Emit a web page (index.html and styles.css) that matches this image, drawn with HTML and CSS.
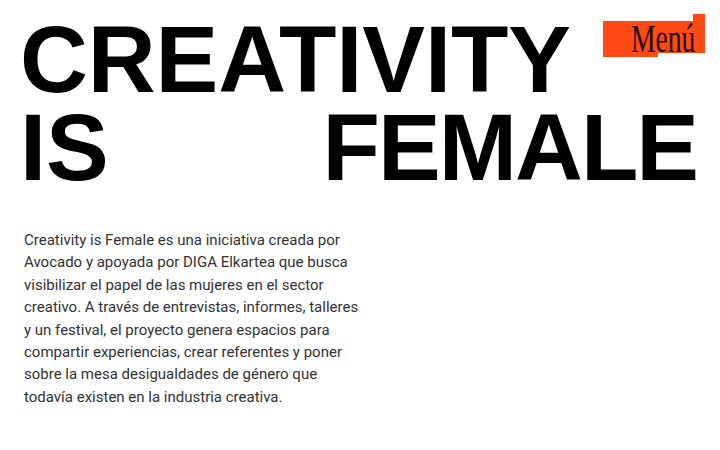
FILE: index.html
```html
<!DOCTYPE html>
<html lang="es">
<head>
<meta charset="utf-8">
<title>Creativity is Female</title>
<link rel="stylesheet" href="styles.css">
</head>
<body>
<header class="hero">
  <h1 class="title">
    <span class="line">CREATIVITY</span>
    <span class="line line-split"><span>IS</span><span class="word-tight">FEMALE</span></span>
  </h1>
  <button class="menu" type="button"><span class="menu-label">Menú</span></button>
</header>
<main class="intro">
  <p>Creativity is Female es una iniciativa creada por Avocado y apoyada por DIGA Elkartea que busca visibilizar el papel de las mujeres en el sector creativo. A través de entrevistas, informes, talleres y un festival, el proyecto genera espacios para compartir experiencias, crear referentes y poner sobre la mesa desigualdades de género que todavía existen en la industria creativa.</p>
</main>
</body>
</html>
```
FILE: styles.css
```css
html, body {
  margin: 0;
  padding: 0;
  background: #ffffff;
}
body {
  width: 720px;
  height: 450px;
  overflow: hidden;
}
.hero {
  position: relative;
  padding: 16px 23px 0 20px;
}
.title {
  margin: 0;
  font-family: "Liberation Sans", Arial, sans-serif;
  font-weight: 700;
  font-size: 94px;
  line-height: 88px;
  letter-spacing: -0.1px;
  color: #000;
}
.line {
  display: block;
  height: 88px;
  white-space: nowrap;
}
.line-split {
  display: flex;
  justify-content: space-between;
}
.word-tight {
  letter-spacing: -2px;
}
.menu {
  position: absolute;
  top: 14px;
  left: 603px;
  width: 102px;
  height: 43px;
  border: 0;
  padding: 0;
  margin: 0;
  background: #ff4a14;
  clip-path: polygon(0 7px, 90px 7px, 90px 0, 102px 0, 102px 39px, 55px 39px, 55px 43px, 0 43px);
  cursor: pointer;
}
.menu-label {
  position: absolute;
  left: 28px;
  top: 5px;
  display: inline-block;
  font-family: "Liberation Serif", "Times New Roman", serif;
  font-size: 40px;
  line-height: 40px;
  color: #1e0c06;
  transform: scaleX(0.69);
  transform-origin: left top;
  white-space: nowrap;
}
.intro {
  padding: 0 24px;
  margin-top: 37px;
}
.intro p {
  margin: 0;
  width: 340px;
  font-family: Roboto, "Liberation Sans", sans-serif;
  font-size: 15px;
  line-height: 22.4px;
  color: #333333;
}
```
